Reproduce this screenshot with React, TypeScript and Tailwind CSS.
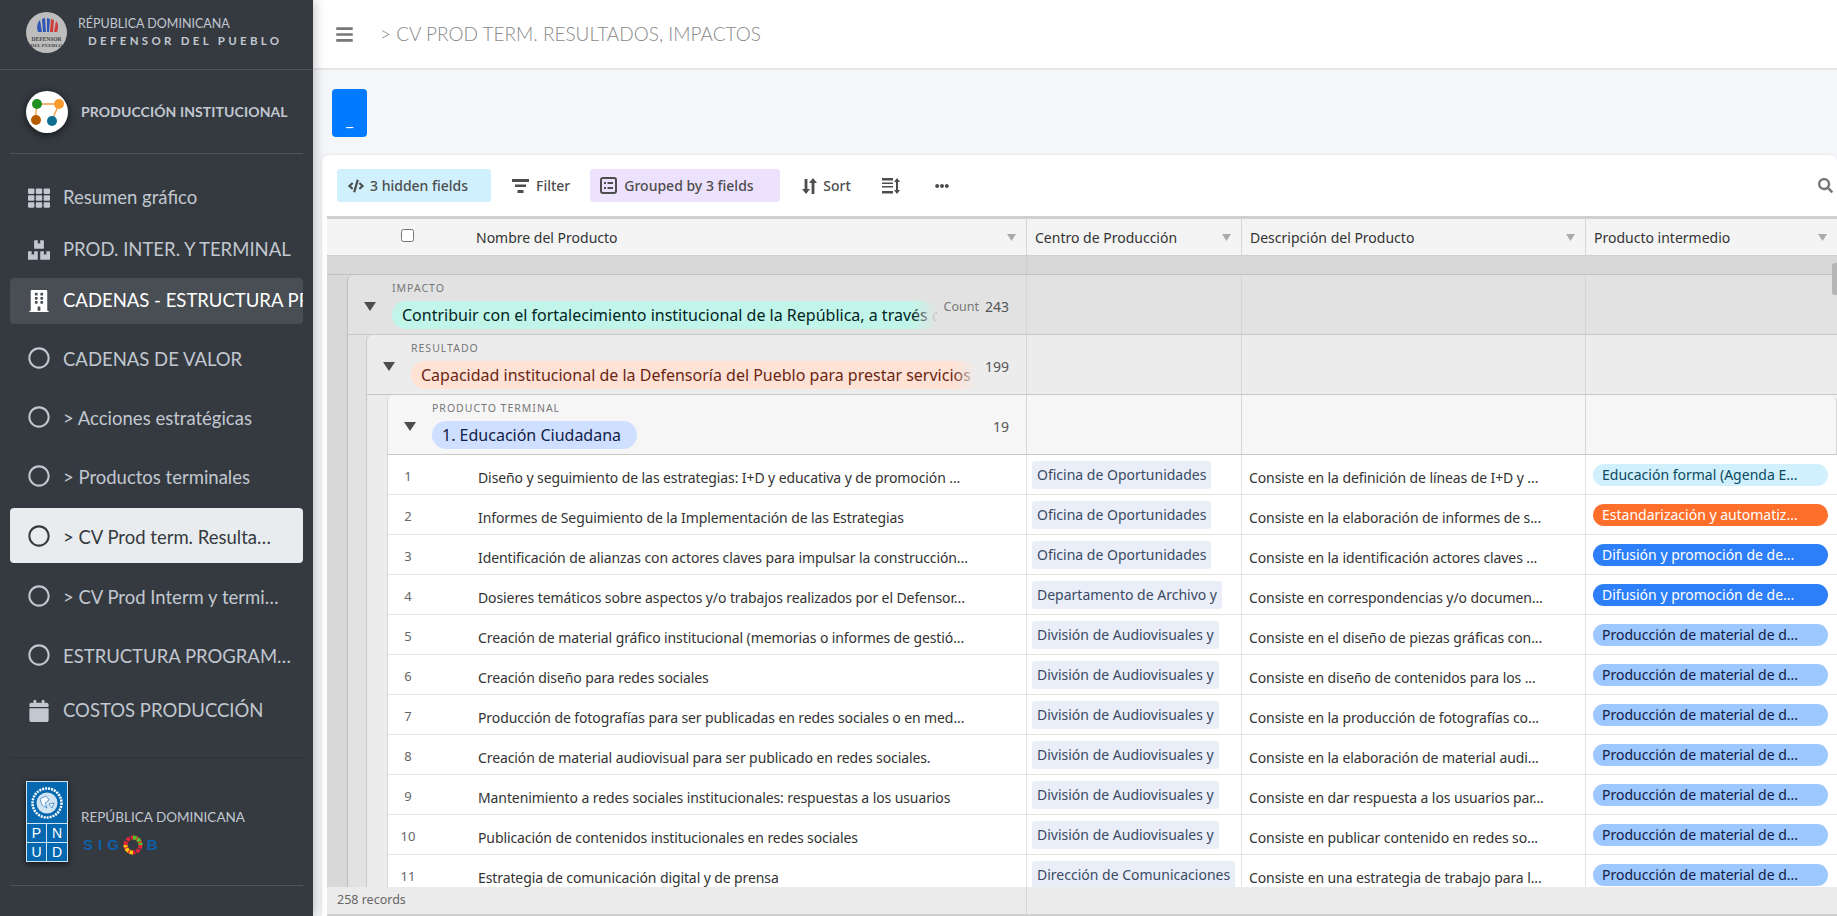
import React from "react";
import { FaTh, FaBoxes, FaBuilding, FaRegCircle, FaCalendar, FaBars, FaSearch, FaEllipsisH, FaCode } from "react-icons/fa";

const names = [
  "Diseño y seguimiento de las estrategias: I+D y educativa y de promoción ...",
  "Informes de Seguimiento de la Implementación de las Estrategias",
  "Identificación de alianzas con actores claves para impulsar la construcción...",
  "Dosieres temáticos sobre aspectos y/o trabajos realizados por el Defensor...",
  "Creación de material gráfico institucional (memorias o informes de gestió...",
  "Creación diseño para redes sociales",
  "Producción de fotografías para ser publicadas en redes sociales o en med...",
  "Creación de material audiovisual para ser publicado en redes sociales.",
  "Mantenimiento a redes sociales institucionales: respuestas a los usuarios",
  "Publicación de contenidos institucionales en redes sociales",
  "Estrategia de comunicación digital y de prensa",
];

const OF = "Oficina de Oportunidades";
const DA = "División de Audiovisuales y";
const centers = [OF, OF, OF, "Departamento de Archivo y", DA, DA, DA, DA, DA, DA, "Dirección de Comunicaciones"];

const descs = [
  "Consiste en la definición de líneas de I+D y ...",
  "Consiste en la elaboración de informes de s...",
  "Consiste en la identificación actores claves ...",
  "Consiste en correspondencias y/o documen...",
  "Consiste en el diseño de piezas gráficas con...",
  "Consiste en diseño de contenidos para los ...",
  "Consiste en la producción de fotografías co...",
  "Consiste en la elaboración de material audi...",
  "Consiste en dar respuesta a los usuarios par...",
  "Consiste en publicar contenido en redes so...",
  "Consiste en una estrategia de trabajo para l...",
];

const PM = { text: "Producción de material de d...", cls: "bg-[#9cc7ff] text-[#102046]" };
const DF = { text: "Difusión y promoción de de...", cls: "bg-[#2d7ff9] text-white" };
const inter = [
  { text: "Educación formal (Agenda E...", cls: "bg-[#d0f0fd] text-[#0b4a5e]" },
  { text: "Estandarización y automatiz...", cls: "bg-[#ff6f2c] text-white" },
  DF, DF, PM, PM, PM, PM, PM, PM, PM,
];

function Caret({ className = "" }: { className?: string }) {
  return (
    <svg width="12" height="9" viewBox="0 0 12 9" className={className}>
      <path d="M0 0h12L6 9z" fill="#4d4d4d" />
    </svg>
  );
}

function HeadCell({ label, className = "" }: { label: string; className?: string }) {
  return (
    <div className={`flex items-center justify-between h-full pl-[8px] pr-[10px] ${className}`}>
      <span className="text-[14px] text-[#333]">{label}</span>
      <svg width="9" height="7" viewBox="0 0 9 7"><path d="M0 0h9L4.5 7z" fill="#aaa" /></svg>
    </div>
  );
}

function NavItem({ icon, label, tall, active, current, mt }: any) {
  const base = tall ? "h-[55px]" : "h-[46px]";
  const tone = current
    ? "bg-[#e9ecef] text-[#343a40]"
    : active
    ? "bg-[#494e54] text-white"
    : "text-[#c2c7d0]";
  return (
    <div className={`${base} ${tone} ${mt} flex items-center rounded-[4px] pl-[17px] overflow-hidden whitespace-nowrap`}>
      <span className="w-[24px] flex justify-center shrink-0 text-[22px]">{icon}</span>
      <span className={`ml-[12px] text-[18.5px] ${tall ? "pt-[5px]" : ""} font-[Lato,'Noto_Sans',sans-serif]`}>{label}</span>
    </div>
  );
}

function GroupHead({ label, text, pillW, pillCls, fade, count, countLabel }: any) {
  return (
    <div className="h-[60px] flex border-b border-[#c8c8c8]">
      <div className="w-[44px] shrink-0 pl-[16px] pt-[27px]"><Caret /></div>
      <div className="min-w-0 flex-1">
        <div className="text-[10.5px] tracking-[1px] text-[#777] leading-[13px] pt-[7px] h-[26px]">{label}</div>
        <div className={`relative h-[28px] rounded-full overflow-hidden whitespace-nowrap text-[16px] leading-[28px] pl-[10px] ${pillCls} ${pillW}`}>
          {text}
          {fade && <div className={`absolute right-0 top-0 bottom-0 w-[24px] bg-gradient-to-r from-transparent ${fade}`} />}
        </div>
      </div>
      <div className="shrink-0 pr-[17px] pl-[8px] pt-[20px] text-[14px] leading-[24px] text-[#555] flex gap-[6px]">
        {countLabel && <span className="text-[12.5px] text-[#777]">{countLabel}</span>}
        <span>{count}</span>
      </div>
    </div>
  );
}

function EmptyRow({ bg, tr }: { bg: string; tr?: boolean }) {
  return (
    <div className={`h-[60px] flex border-b border-[#c8c8c8] ${bg}`}>
      <div className="w-[215px] border-l border-[#d6d6d6]" />
      <div className="w-[344px] border-l border-[#d6d6d6]" />
      <div className={`flex-1 border-l border-[#d6d6d6] ${tr ? "border-r rounded-tr-[6px]" : ""}`} />
    </div>
  );
}

export default function App() {
  return (
    <div className="flex h-screen w-full overflow-hidden bg-white font-['Noto_Sans',sans-serif]">
      <aside className="w-[313px] shrink-0 bg-[#343a40] flex flex-col z-10 shadow-[0_0_12px_rgba(0,0,0,0.3)] font-[Lato,sans-serif]">
        <div className="h-[70px] mx-[0px] border-b border-[#4b545c] flex items-center pl-[26px] shrink-0">
          <svg width="41" height="41" viewBox="0 0 41 41" className="shrink-0 -mt-[5px]">
            <circle cx="20.5" cy="20.5" r="20.5" fill="#bdbdbd" />
            <path d="M12 20c-2-6 0-10 2-12l2 12zM17 20l-1-13 3-1 1 14zM21 20V6l3 1-1 13z" fill="#2f55b5" />
            <path d="M24 20l1-13 3 1-1 12zM28 20l2-11c2 2 3 6 1 11z" fill="#d03c3c" />
            <text x="20.5" y="29" fontSize="5.5" fontFamily="Liberation Serif" fontWeight="700" textAnchor="middle" fill="#444">DEFENSOR</text>
            <text x="20.5" y="35" fontSize="5" fontFamily="Liberation Serif" fontWeight="700" textAnchor="middle" fill="#444">DEL PUEBLO</text>
          </svg>
          <div className="ml-[11px] -mt-[5px]">
            <div className="text-[12.5px] leading-[16px] text-[#c2c7d0]">RÉPUBLICA DOMINICANA</div>
            <div className="text-[11.5px] leading-[16px] font-bold tracking-[3.3px] text-[#c2c7d0] ml-[10px] mt-[1px]">DEFENSOR DEL PUEBLO</div>
          </div>
        </div>
        <div className="mx-[10px] h-[84px] border-b border-[#4b545c] flex items-center pl-[16px] shrink-0">
          <svg width="42" height="42" viewBox="0 0 42 42" className="shrink-0 drop-shadow-[0_2px_4px_rgba(0,0,0,0.6)]">
            <circle cx="21" cy="21" r="21" fill="#fff" />
            <path d="M11 13H33M11 13L9 29M33 13L26 29" stroke="#f59a3c" strokeWidth="1.3" fill="none" />
            <circle cx="11" cy="13" r="5" fill="#1f8f1f" />
            <circle cx="33" cy="13" r="5" fill="#f89a2c" />
            <circle cx="10" cy="29" r="5" fill="#b85c00" />
            <circle cx="26" cy="30" r="5" fill="#0f6f93" />
          </svg>
          <div className="ml-[13px] text-[14px] font-bold text-[#c2c7d0] tracking-[0.1px]">PRODUCCIÓN INSTITUCIONAL</div>
        </div>
        <nav className="mx-[10px] mt-[21px] flex flex-col shrink-0 h-[582px]">
          <NavItem icon={<FaTh />} label="Resumen gráfico" />
          <NavItem icon={<FaBoxes />} label="PROD. INTER. Y TERMINAL" mt="mt-[6px]" />
          <NavItem icon={<FaBuilding className="text-white" />} label="CADENAS - ESTRUCTURA PROGRAMÁTICA" active mt="mt-[5px]" />
          <NavItem icon={<FaRegCircle />} label="CADENAS DE VALOR" tall mt="mt-[6px]" />
          <NavItem icon={<FaRegCircle />} label="> Acciones estratégicas" tall mt="mt-[4px]" />
          <NavItem icon={<FaRegCircle />} label="> Productos terminales" tall mt="mt-[4px]" />
          <NavItem icon={<FaRegCircle />} label="> CV Prod term. Resulta…" tall current mt="mt-[5px]" />
          <NavItem icon={<FaRegCircle />} label="> CV Prod Interm y termi…" tall mt="mt-[5px]" />
          <NavItem icon={<FaRegCircle />} label="ESTRUCTURA PROGRAM…" tall mt="mt-[4px]" />
          <NavItem icon={<FaCalendar />} label="COSTOS PRODUCCIÓN" mt="mt-[6px]" />
        </nav>
        <div className="mx-[10px] h-[129px] border-t border-[#2c3136] border-b-[1.5px] border-b-[#4b545c] flex items-center pl-[16px] shrink-0">
          <div className="w-[42px] h-[81px] shrink-0 bg-[#0468b1] border border-[#cfe3f3] flex flex-col shadow-[0_2px_6px_rgba(0,0,0,0.6)]">
            <div className="h-[41px] flex items-center justify-center">
              <svg width="32" height="32" viewBox="0 0 32 32">
                <circle cx="16" cy="16" r="14.5" fill="none" stroke="#fff" strokeWidth="2.5" strokeDasharray="2 1" />
                <circle cx="16" cy="16" r="10.5" fill="#cfe3f3" />
                <path d="M9 12l6-3 3 4-4 3 2 5-5-3zM18 17l5-1-2 5z" fill="#fff" stroke="#0468b1" strokeWidth="0.6" />
              </svg>
            </div>
            <div className="flex-1 grid grid-cols-2 grid-rows-2 text-white text-[14px] leading-none border-t border-[#cfe3f3]">
              <span className="flex items-center justify-center border-r border-b border-[#cfe3f3] font-['Liberation_Sans',sans-serif]">P</span>
              <span className="flex items-center justify-center border-b border-[#cfe3f3] font-['Liberation_Sans',sans-serif]">N</span>
              <span className="flex items-center justify-center border-r border-[#cfe3f3] font-['Liberation_Sans',sans-serif]">U</span>
              <span className="flex items-center justify-center font-['Liberation_Sans',sans-serif]">D</span>
            </div>
          </div>
          <div className="ml-[13px] mt-[20px]">
            <div className="text-[13.5px] leading-[18px] text-[#c2c7d0]">REPÚBLICA DOMINICANA</div>
            <div className="mt-[9px] flex items-center text-[#0f5fa8] font-['Liberation_Sans',sans-serif] font-bold text-[15px] leading-[20px] tracking-[5px] ml-[2px]">
              <span>SIG</span>
              <svg width="20" height="20" viewBox="0 0 20 20" className="mr-[4px] -ml-[1px]">
                <circle cx="10" cy="10" r="7.5" fill="none" stroke="#e5243b" strokeWidth="4" strokeDasharray="3.5 1.2" />
                <path d="M10 2.5a7.5 7.5 0 0 1 7.5 7.5" fill="none" stroke="#56c02b" strokeWidth="4" strokeDasharray="3.5 1.2" />
                <path d="M10 17.5a7.5 7.5 0 0 1-7.5-7.5" fill="none" stroke="#fcc30b" strokeWidth="4" strokeDasharray="3.5 1.2" />
              </svg>
              <span>B</span>
            </div>
          </div>
        </div>
      </aside>

      <main className="flex-1 min-w-0 flex flex-col">
        <header className="h-[70px] shrink-0 bg-white border-b-2 border-[#e4e6e8] flex items-center pl-[22px]">
          <FaBars className="text-[#777] text-[19px]" />
          <span className="ml-[26px] text-[19px] font-light text-[#888] font-[Lato,sans-serif]">{"> CV PROD TERM. RESULTADOS, IMPACTOS"}</span>
        </header>
        <div className="flex-1 min-h-0 bg-[#f4f6f9] flex flex-col">
          <button className="shrink-0 mt-[19px] ml-[19px] w-[35px] h-[48px] bg-[#007bff] rounded-[4px] text-white text-[16px] flex items-end justify-center pb-[9px] leading-none">_</button>
          <section className="flex-1 min-h-0 mt-[18px] ml-[9px] bg-white rounded-t-[6px] flex flex-col shadow-[0_0_2px_rgba(0,0,0,0.15)]">
            <div className="h-[61px] shrink-0 flex items-center pl-[15px] pr-[4px] text-[14px] text-[#4d4d4d] font-medium">
              <div className="h-[33px] w-[154px] bg-[#d0f0fd] rounded-[3px] flex items-center pl-[11px] gap-[6px]"><FaCode className="text-[16px]" /><span>3 hidden fields</span></div>
              <div className="ml-[21px] flex items-center gap-[7px]">
                <svg width="17" height="14" viewBox="0 0 17 14"><path d="M0 0h17v3H0zM3 5.5h11v2.6H3zM5.5 11h6v3h-6z" fill="#4d4d4d" /></svg>
                <span>Filter</span>
              </div>
              <div className="ml-[20px] h-[33px] w-[190px] bg-[#ede2fe] rounded-[3px] flex items-center pl-[10px] gap-[7px]">
                <svg width="17" height="17" viewBox="0 0 17 17"><rect x="1" y="1" width="15" height="15" rx="2" fill="none" stroke="#4d4d4d" strokeWidth="2" /><path d="M4 5h2v2H4zM7.5 5H13v2H7.5zM4 10h2v2H4zM7.5 10H13v2H7.5z" fill="#4d4d4d" /></svg>
                <span>Grouped by 3 fields</span>
              </div>
              <div className="ml-[22px] flex items-center gap-[6px]">
                <svg width="15" height="16" viewBox="0 0 15 16"><path d="M4 16L0 11h2.6V1h2.8v10H8zM11 0l4 5h-2.6v11H9.600V5H7z" fill="#4d4d4d" /></svg>
                <span>Sort</span>
              </div>
              <svg width="18" height="16" viewBox="0 0 18 16" className="ml-[31px]"><path d="M0 0h11v2.500H0zM0 4.500h11v1.500H0zM0 8h11v1.500H0zM0 13h11v2.500H0zM15 0l3 4h-2v8h2l-3 4-3-4h2V4h-2z" fill="#4d4d4d" /></svg>
              <FaEllipsisH className="ml-[35px] text-[#4d4d4d] text-[14px]" />
              <FaSearch className="ml-auto text-[#777] text-[15px]" />
            </div>

            <div className="flex-1 min-h-0 ml-[5px] flex flex-col border-t-[3px] border-[#cfcfcf] relative">
              <div className="h-[37px] shrink-0 flex bg-[#f4f4f4] border-b border-[#cfcfcf]">
                <div className="w-[699px] shrink-0 flex items-center justify-between pr-[10px]">
                  <div className="flex items-center">
                    <input type="checkbox" className="ml-[74px] w-[13px] h-[13px] -mt-[4px]" />
                    <span className="ml-[62px] text-[14px] text-[#333]">Nombre del Producto</span>
                  </div>
                  <svg width="9" height="7" viewBox="0 0 9 7"><path d="M0 0h9L4.5 7z" fill="#aaa" /></svg>
                </div>
                <HeadCell label="Centro de Producción" className="w-[215px] border-l border-[#d6d6d6]" />
                <HeadCell label="Descripción del Producto" className="w-[344px] border-l border-[#d6d6d6]" />
                <HeadCell label="Producto intermedio" className="flex-1 border-l border-[#d6d6d6]" />
              </div>

              <div className="flex-1 min-h-0 overflow-hidden bg-[#d8d8d8]">
                <div className="h-[19px] border-b border-[#c0c0c0] flex">
                  <div className="w-[699px]" />
                  <div className="flex-1 border-l border-[#cfcfcf]" />
                </div>
                <div className="flex">
                  <div className="w-[699px] shrink-0 pl-[20px]">
                    <div className="bg-[#e2e2e2] border-l border-[#bdbdbd] rounded-tl-[6px]">
                      <GroupHead label="IMPACTO" countLabel="Count" count="243" pillW="w-[545px]" pillCls="bg-[#c2f5e9] text-[#012524]" fade="to-[#e2e2e2]" text="Contribuir con el fortalecimiento institucional de la República, a través de" />
                      <div className="pl-[18px]">
                        <div className="bg-[#ececec] border-l border-[#c8c8c8] rounded-tl-[6px]">
                          <GroupHead label="RESULTADO" count="199" pillW="w-[566px]" pillCls="bg-[#fee2d5] text-[#6b2613]" fade="to-[#ececec]" text="Capacidad institucional de la Defensoría del Pueblo para prestar servicios" />
                          <div className="pl-[20px]">
                            <div className="bg-white border-l border-[#d6d6d6] rounded-tl-[6px]">
                              <div className="bg-[#f6f6f6] rounded-tl-[6px]">
                                <GroupHead label="PRODUCTO TERMINAL" count="19" pillW="w-[205px]" pillCls="bg-[#cfdfff] text-[#102046]" text="1. Educación Ciudadana" />
                              </div>
                              {names.map((n, i) => (
                                <div key={i} className="h-[40px] flex items-center border-b border-[#e3e3e3] bg-white pt-[5px]">
                                  <span className="w-[40px] text-center text-[13px] text-[#666]">{i + 1}</span>
                                  <span className="ml-[50px] text-[14px] text-[#333] whitespace-nowrap tracking-[-0.1px]">{n}</span>
                                </div>
                              ))}
                            </div>
                          </div>
                        </div>
                      </div>
                    </div>
                  </div>
                  <div className="flex-1 min-w-0 relative">
                    <EmptyRow bg="bg-[#e2e2e2]" />
                    <EmptyRow bg="bg-[#ececec]" />
                    <EmptyRow bg="bg-[#f6f6f6]" tr />
                    {names.map((_, i) => (
                      <div key={i} className="h-[40px] flex border-b border-[#e3e3e3] bg-white text-[14px]">
                        <div className="w-[215px] border-l border-[#e3e3e3] pl-[5px] pr-[4px] pt-[6px] overflow-hidden">
                          <span className="inline-block max-w-full h-[28px] leading-[27px] px-[5px] rounded-[3px] bg-[#e9eef9] text-[#3b4a63] whitespace-nowrap overflow-hidden align-top">{centers[i]}</span>
                        </div>
                        <div className="w-[344px] border-l border-[#e3e3e3] pl-[7px] pt-[11px] leading-[24px] text-[#333] whitespace-nowrap overflow-hidden tracking-[-0.1px]">{descs[i]}</div>
                        <div className="flex-1 border-l border-[#e3e3e3] pl-[7px] pr-[9px] pt-[9px]">
                          <div className={`h-[22px] rounded-full leading-[22px] pl-[9px] whitespace-nowrap overflow-hidden ${inter[i].cls}`}>{inter[i].text}</div>
                        </div>
                      </div>
                    ))}
                  </div>
                </div>
              </div>

              <div className="h-[29px] shrink-0 flex bg-[#ebebeb] text-[12.5px] text-[#666] border-b-2 border-[#cfcfcf]">
                <div className="w-[699px] pl-[10px] flex items-center">258 records</div>
                <div className="flex-1 border-l border-[#d6d6d6]" />
              </div>
              <div className="absolute right-[0px] top-[44px] w-[5px] h-[32px] rounded-l-[3px] bg-[#b5b5b5]" />
            </div>
          </section>
        </div>
      </main>
    </div>
  );
}
